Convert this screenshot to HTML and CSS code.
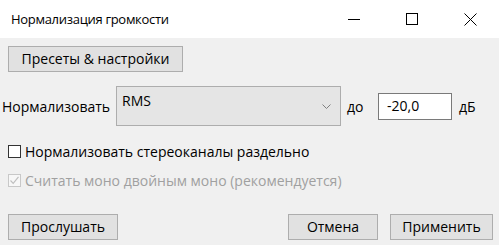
FILE: index.html
```html
<!DOCTYPE html>
<html lang="ru">
<head>
<meta charset="utf-8">
<link rel="stylesheet" href="styles.css">
</head>
<body>
<div class="window">
  <div class="titlebar">
    <div class="title">Нормализация громкости</div>
    <div class="controls">
      <span class="ctl"><svg width="12" height="12" viewBox="0 0 12 12"><path d="M0 6.5H12" stroke="#000" stroke-width="1"/></svg></span>
      <span class="ctl"><svg width="12" height="12" viewBox="0 0 12 12"><rect x="0.5" y="0.5" width="11" height="11" fill="none" stroke="#000" stroke-width="1"/></svg></span>
      <span class="ctl"><svg width="13" height="13" viewBox="0 0 13 13"><path d="M0.5 0.5L12.5 12.5M12.5 0.5L0.5 12.5" stroke="#000" stroke-width="1"/></svg></span>
    </div>
  </div>
  <div class="content">
    <div class="row-presets"><button class="btn btn-presets">Пресеты &amp; настройки</button></div>
    <div class="row-norm">
      <span class="label">Нормализовать</span>
      <div class="combo"><span class="combo-text">RMS</span>
        <svg class="chev" width="9" height="5" viewBox="0 0 9 5"><path d="M0.5 0.5L4.5 4.5L8.5 0.5" fill="none" stroke="#808080" stroke-width="1"/></svg>
      </div>
      <span class="label-to">до</span>
      <div class="edit">-20,0</div>
      <span class="label-db">дБ</span>
    </div>
    <label class="check"><span class="box"></span><span>Нормализовать стереоканалы раздельно</span></label>
    <label class="check disabled"><span class="box"><svg width="11" height="11" viewBox="0 0 11 11"><path d="M1.5 5.5L4.2 8.3L9.5 1.8" fill="none" stroke="#bfbfbf" stroke-width="1.2"/></svg></span><span>Считать моно двойным моно (рекомендуется)</span></label>
    <div class="row-buttons">
      <button class="btn btn-listen">Прослушать</button>
      <div class="spacer"></div>
      <button class="btn btn-cancel">Отмена</button>
      <button class="btn btn-apply">Применить</button>
    </div>
  </div>
</div>
</body>
</html>
```
FILE: styles.css
```css
* { box-sizing: border-box; }
html, body { margin: 0; padding: 0; }
body {
  width: 499px; height: 245px; overflow: hidden;
  font-family: "Open Sans", "Noto Sans", sans-serif;
  font-size: 14px; color: #000;
  background: #f0f0f0;
}
.window { width: 499px; height: 245px; display: flex; flex-direction: column; }
.titlebar {
  height: 38px; background: #fff; display: flex; align-items: center;
}
.title { padding-left: 11px; font-size: 13px; letter-spacing: -0.3px; flex: 1; padding-bottom: 1px; }
.controls { display: flex; align-items: center; height: 100%; }
.ctl { width: 58px; display: flex; justify-content: center; align-items: center; height: 100%; }
.content { flex: 1; background: #f0f0f0; display: flex; flex-direction: column; }
.btn {
  font: inherit; background: #e1e1e1; border: 1px solid #adadad;
  height: 26px; padding: 0; color: #000; line-height: 22px;
}
.row-presets { padding: 8px 0 0 8px; }
.btn-presets { width: 175px; }
.row-norm { display: flex; align-items: center; margin-top: 14px; height: 40px; }
.label { margin-left: 2px; width: 114px; }
.combo {
  width: 225px; height: 40px; background: #e5e5e5; border: 1px solid #adadad;
  position: relative;
}
.combo-text { position: absolute; left: 5px; top: 4px; }
.chev { position: absolute; right: 9px; top: 17px; }
.label-to { margin-left: 6px; width: 31px; }
.edit {
  width: 74px; height: 27px; background: #fff; border: 1px solid #7a7a7a;
  padding-left: 8px; line-height: 23px;
}
.label-db { margin-left: 7px; }
.check { display: flex; align-items: center; margin-left: 8px; height: 18px; }
.check .box {
  width: 13px; height: 13px; border: 1px solid #333; background: #fff; margin-right: 4px;
  display: flex; align-items: center; justify-content: center;
}
.check:first-of-type { margin-top: 16px; }
.check.disabled { color: #a0a0a0; margin-top: 11px; }
.check.disabled .box { border-color: #c8c8c8; background: #f7f7f7; }
.row-buttons { display: flex; margin-top: 25px; padding: 0 6px 0 8px; }
.spacer { flex: 1; }
.btn-listen { width: 110px; }
.btn-cancel { width: 90px; margin-right: 12px; }
.btn-apply { width: 103px; }
```
